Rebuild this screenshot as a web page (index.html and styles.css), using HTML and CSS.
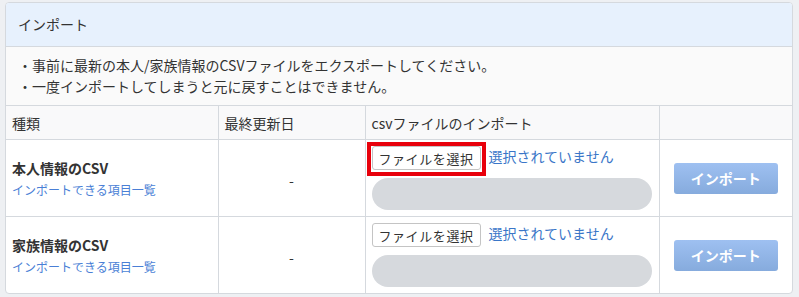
FILE: index.html
```html
<!DOCTYPE html>
<html lang="ja">
<head>
    <meta charset="utf-8">
    <title>インポート</title>
    <link rel="stylesheet" href="styles.css">
</head>
<body>
    <div class="panel">
        <div class="panel-head">インポート</div>

        <div class="notes">
            <p>・事前に最新の本人/家族情報のCSVファイルをエクスポートしてください。</p>
            <p>・一度インポートしてしまうと元に戻すことはできません。</p>
        </div>

        <table class="import-table">
            <colgroup>
                <col class="col-kind">
                <col class="col-date">
                <col class="col-file">
                <col>
            </colgroup>
            <tr>
                <th>種類</th>
                <th>最終更新日</th>
                <th>csvファイルのインポート</th>
                <th></th>
            </tr>
            <tr>
                <td>
                    <div class="kind-title">本人情報のCSV</div>
                    <a class="kind-link" href="#">インポートできる項目一覧</a>
                </td>
                <td class="date">-</td>
                <td>
                    <div class="file-line">
                        <button class="file-button">ファイルを選択</button>
                        <span class="file-name">選択されていません</span>
                        <span class="mark"></span>
                    </div>
                    <div class="progress"></div>
                </td>
                <td class="action"><button class="import-button">インポート</button></td>
            </tr>
            <tr>
                <td>
                    <div class="kind-title">家族情報のCSV</div>
                    <a class="kind-link" href="#">インポートできる項目一覧</a>
                </td>
                <td class="date">-</td>
                <td>
                    <div class="file-line">
                        <button class="file-button">ファイルを選択</button>
                        <span class="file-name">選択されていません</span>
                    </div>
                    <div class="progress"></div>
                </td>
                <td class="action"><button class="import-button">インポート</button></td>
            </tr>
        </table>
    </div>
</body>
</html>
```

FILE: styles.css
```css
body {
    margin: 0;
    padding: 2px 0 0 5px;
    background-color: #eef0f3;
    color: #333;
    font-family: "Noto Sans CJK JP", "Noto Sans", sans-serif;
    font-size: 14px;
}
.panel {
    box-sizing: border-box;
    width: 788px;
    background-color: #fff;
    border: 1px solid #d5d9de;
    border-radius: 4px;
    overflow: hidden;
}
.panel-head {
    height: 43px;
    line-height: 43px;
    padding-left: 12px;
    background-color: #e7f1fd;
    border-bottom: 1px solid #d5d9de;
}
.notes {
    height: 42px;
    padding: 8px 12px;
    background-color: #fafafa;
    border-bottom: 1px solid #d5d9de;
}
.notes p {
    margin: 0;
    line-height: 21px;
}
.import-table {
    width: 100%;
    border-collapse: collapse;
    table-layout: fixed;
}
.col-kind {
    width: 212px;
}
.col-date {
    width: 147px;
}
.col-file {
    width: 294px;
}
th, td {
    border: 1px solid #d5d9de;
    padding: 0 6px;
    text-align: left;
    vertical-align: middle;
}
tr:first-child th {
    border-top: none;
}
tr > :first-child {
    border-left: none;
}
tr > :last-child {
    border-right: none;
}
tr:last-child td {
    border-bottom: none;
}
th {
    height: 33px;
    font-weight: normal;
    background-color: #f9f9fa;
}
td {
    height: 75px;
    padding: 6px 6px;
    box-sizing: border-box;
}
.kind-title {
    font-weight: bold;
    line-height: 22px;
}
.kind-link {
    font-size: 12px;
    line-height: 18px;
    color: #4a7fd6;
    text-decoration: none;
}
.date {
    text-align: center;
    padding-top: 10px;
}
.file-line {
    position: relative;
    display: flex;
    align-items: center;
    gap: 8px;
    height: 24px;
}
.file-button {
    box-sizing: border-box;
    width: 109px;
    height: 24px;
    padding: 0;
    background-color: #fff;
    border: 1px solid #c4c4c4;
    border-radius: 3px;
    color: #333;
    font-family: inherit;
    font-size: 13px;
    letter-spacing: 0.6px;
}
.file-name {
    color: #3a76c8;
    line-height: 20px;
    margin-top: -4px;
}
.mark {
    position: absolute;
    left: -5px;
    top: -4px;
    width: 111px;
    height: 26px;
    border: 4px solid #e8000b;
}
.progress {
    margin-top: 8px;
    height: 32px;
    width: 280px;
    border-radius: 16px;
    background-color: #d6d9dd;
}
.action {
    text-align: center;
}
.import-button {
    width: 104px;
    height: 31px;
    border: none;
    border-radius: 3px;
    background: linear-gradient(#9ec0f1, #86abdd);
    color: #fff;
    font-family: inherit;
    font-size: 14px;
    font-weight: bold;
}
```
